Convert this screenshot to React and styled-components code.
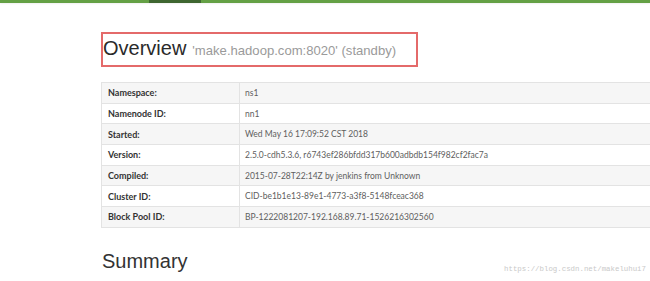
import React from "react";
import styled, { createGlobalStyle } from "styled-components";

const Global = createGlobalStyle`
  html, body { margin: 0; padding: 0; background: #fff; }
  body { width: 650px; height: 281px; overflow: hidden; position: relative; font-family: "Liberation Sans", Arial, sans-serif; color: #333; }
`;

const TopBar = styled.div`
  height: 3px;
  background: #64a045;
  display: flex;
  box-shadow: 0 1px 2px rgba(0,0,0,0.06);
`;

const ActiveTab = styled.div`
  margin-left: 149px;
  width: 52px;
  background: #3e6630;
`;

const Container = styled.div`
  padding-left: 101px;
`;

const Header = styled.div`
  margin-top: 29px;
  width: 313px;
  height: 31px;
  border: 2px solid #e46a6a;
  display: flex;
  align-items: baseline;
  padding: 0 0 0 0;
  box-sizing: content-box;
`;

const Title = styled.h1`
  margin: 0;
  font-family: "Liberation Sans", Arial, sans-serif;
  font-weight: 400;
  font-size: 20px;
  line-height: 29px;
  color: #2a2a2a;
`;

const Sub = styled.small`
  margin-left: 6px;
  font-size: 13.1px;
  color: #9a9a9a;
`;

const Table = styled.table`
  margin-top: 15px;
  width: 560px;
  border-collapse: collapse;
  border: 1px solid #e3e3e3;
  font-family: Lato, "Open Sans", sans-serif;
  font-size: 8.5px;
`;

const Row = styled.tr`
  background: ${(p) => (p.$striped ? "#f6f6f6" : "#ffffff")};
  height: 20.7px;
`;

const Label = styled.th`
  width: 131px;
  text-align: left;
  font-weight: 700;
  font-size: 9px;
  color: #333;
  padding: 0 0 0 6px;
  border-top: 1px solid #e3e3e3;
  border-right: 1px solid #e3e3e3;
`;

const Value = styled.td`
  padding: 0 0 0 5px;
  color: #5e5e5e;
  border-top: 1px solid #e3e3e3;
`;

const Summary = styled.h2`
  margin: 21px 0 0 1px;
  font-family: "Liberation Sans", Arial, sans-serif;
  font-weight: 400;
  font-size: 20px;
  line-height: 24px;
  color: #333;
`;

const Watermark = styled.div`
  position: absolute;
  right: 4px;
  bottom: 8px;
  font-family: "Liberation Mono", monospace;
  font-size: 7.4px;
  color: #c9c9c9;
`;

const rows = [
  ["Namespace:", "ns1"],
  ["Namenode ID:", "nn1"],
  ["Started:", "Wed May 16 17:09:52 CST 2018"],
  ["Version:", "2.5.0-cdh5.3.6, r6743ef286bfdd317b600adbdb154f982cf2fac7a"],
  ["Compiled:", "2015-07-28T22:14Z by jenkins from Unknown"],
  ["Cluster ID:", "CID-be1b1e13-89e1-4773-a3f8-5148fceac368"],
  ["Block Pool ID:", "BP-1222081207-192.168.89.71-1526216302560"],
];

export default function App() {
  return (
    <>
      <Global />
      <TopBar>
        <ActiveTab />
      </TopBar>
      <Container>
        <Header>
          <Title>Overview</Title>
          <Sub>'make.hadoop.com:8020' (standby)</Sub>
        </Header>
        <Table>
          <tbody>
            {rows.map(([k, v], i) => (
              <Row key={k} $striped={i % 2 === 0}>
                <Label>{k}</Label>
                <Value>{v}</Value>
              </Row>
            ))}
          </tbody>
        </Table>
        <Summary>Summary</Summary>
      </Container>
      <Watermark>https://blog.csdn.net/makeluhui7</Watermark>
    </>
  );
}
